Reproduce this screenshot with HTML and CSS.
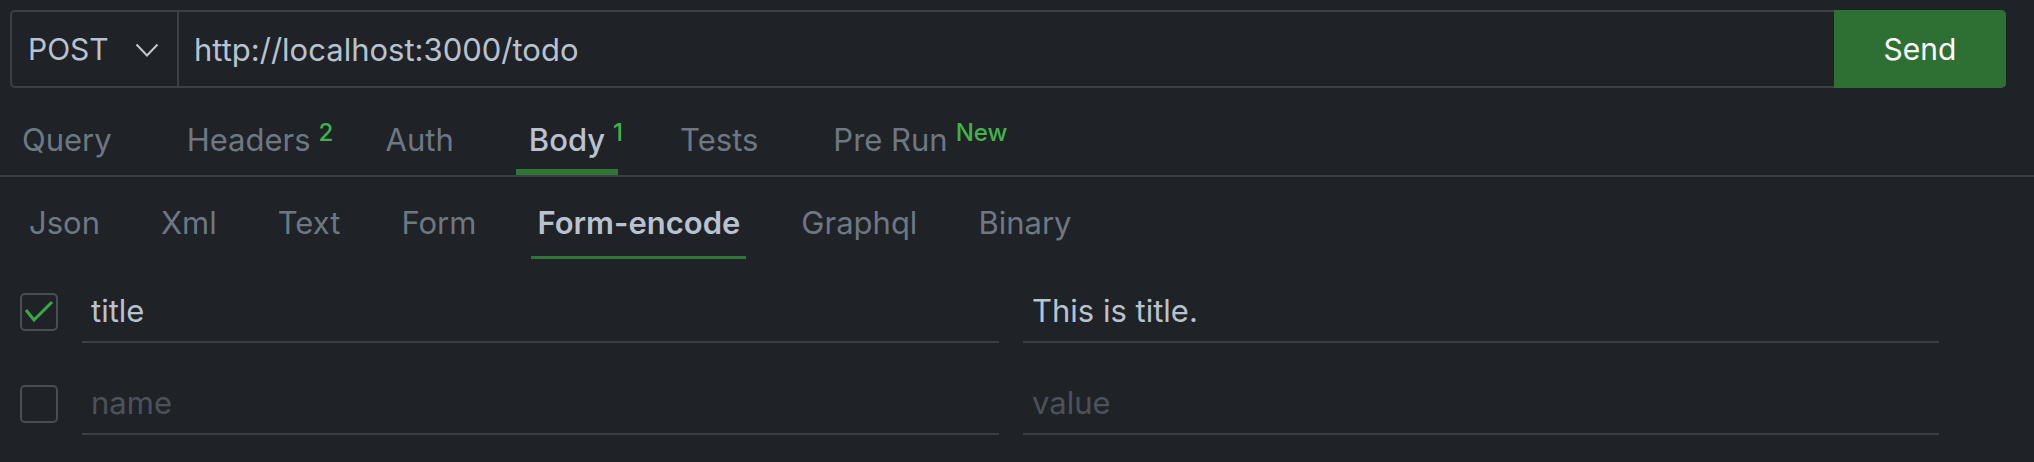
FILE: index.html
```html
<!DOCTYPE html>
<html>
<head>
<meta charset="utf-8">
<link rel="stylesheet" href="styles.css">
</head>
<body>
<div class="app">
  <div class="urlbar">
    <div class="method">
      <span class="method-name">POST</span>
      <svg class="chev" width="24" height="15" viewBox="0 0 24 15"><polyline points="1.5,1.5 12,12.5 22.5,1.5" fill="none" stroke="#c3c7cc" stroke-width="2"/></svg>
    </div>
    <div class="url">http://localhost:3000/todo</div>
    <button class="send">Send</button>
  </div>

  <div class="tabs">
    <div class="tab">Query</div>
    <div class="tab">Headers<sup class="badge">2</sup></div>
    <div class="tab">Auth</div>
    <div class="tab active">Body<sup class="badge">1</sup></div>
    <div class="tab">Tests</div>
    <div class="tab">Pre Run<sup class="badge">New</sup></div>
  </div>

  <div class="subtabs">
    <div class="subtab">Json</div>
    <div class="subtab">Xml</div>
    <div class="subtab">Text</div>
    <div class="subtab">Form</div>
    <div class="subtab active">Form-encode</div>
    <div class="subtab">Graphql</div>
    <div class="subtab">Binary</div>
  </div>

  <div class="rows">
    <div class="row">
      <div class="check on">
        <svg width="38" height="38" viewBox="0 0 38 38"><polyline points="6,17 14,27 32,9" fill="none" stroke="#3aa845" stroke-width="3"/></svg>
      </div>
      <div class="field">title</div>
      <div class="field">This is title.</div>
    </div>
    <div class="row">
      <div class="check"></div>
      <div class="field placeholder">name</div>
      <div class="field placeholder">value</div>
    </div>
  </div>
</div>
</body>
</html>
```

FILE: styles.css
```css
* { box-sizing: border-box; }
html, body {
  margin: 0;
  padding: 0;
  background: #1f2227;
  font-family: Inter, "Noto Sans", sans-serif;
  color: #b8c3cf;
}
.app {
  width: 2034px;
  height: 462px;
  overflow: hidden;
}
.urlbar {
  display: flex;
  margin: 10px 28px 0 10px;
  height: 78px;
  border: 2px solid #3d4045;
  border-radius: 5px;
}
.method {
  width: 167px;
  display: flex;
  align-items: center;
  justify-content: space-between;
  padding: 0 18px 0 16px;
  border-right: 2px solid #3d4045;
}
.method-name {
  font-size: 30px;
  color: #b8c3cf;
}
.chev { display: block; margin-top: 2px; }
.url {
  flex: 1;
  display: flex;
  align-items: center;
  padding-left: 15px;
  font-size: 31px;
  color: #b8c3cf;
}
.send {
  width: 172px;
  margin: -2px -2px -2px 0;
  border: none;
  border-radius: 0 5px 5px 0;
  background: #2e7033;
  color: #ffffff;
  font-family: Inter, "Noto Sans", sans-serif;
  font-size: 30px;
  padding: 0;
}
.tabs {
  display: flex;
  gap: 49px;
  height: 89px;
  padding-left: 9px;
  border-bottom: 2px solid #3b3e43;
  align-items: flex-end;
}
.tab {
  position: relative;
  padding: 0 13px 11px;
  font-size: 31px;
  line-height: 36px;
  color: #6e7883;
  border-bottom: 6px solid transparent;
}
.tab.active {
  color: #b8c3cf;
  font-weight: 500;
  border-bottom-color: #2f7535;
}
.badge {
  position: absolute;
  top: -2px;
  left: 100%;
  margin-left: -5px;
  font-size: 24px;
  font-weight: 500;
  line-height: 26px;
  color: #40b34a;
  white-space: nowrap;
}
.subtabs {
  display: flex;
  gap: 49px;
  height: 82px;
  padding-left: 23px;
  align-items: flex-end;
}
.subtab {
  padding: 0 6px 15px;
  font-size: 31px;
  line-height: 36px;
  color: #6e7883;
  border-bottom: 3px solid transparent;
}
.subtab.active {
  color: #b8c3cf;
  font-weight: 600;
  border-bottom-color: #2f7535;
}
.rows {
  padding: 34px 0 0 20px;
  display: flex;
  flex-direction: column;
  gap: 54px;
}
.row {
  display: flex;
  align-items: center;
  gap: 24px;
  height: 38px;
}
.check {
  width: 38px;
  height: 38px;
  flex: none;
  border: 2px solid #4a4d52;
  border-radius: 5px;
  position: relative;
}
.check svg {
  position: absolute;
  left: -2px;
  top: -2px;
}
.field {
  width: 917px;
  height: 50px;
  margin-top: 12px;
  padding: 0 9px 12px;
  display: flex;
  align-items: flex-end;
  font-size: 31px;
  line-height: 36px;
  border-bottom: 2px solid #3a3d42;
  color: #b8c3cf;
}
.field + .field { width: 916px; }
.field.placeholder { color: #4c525a; }
```
